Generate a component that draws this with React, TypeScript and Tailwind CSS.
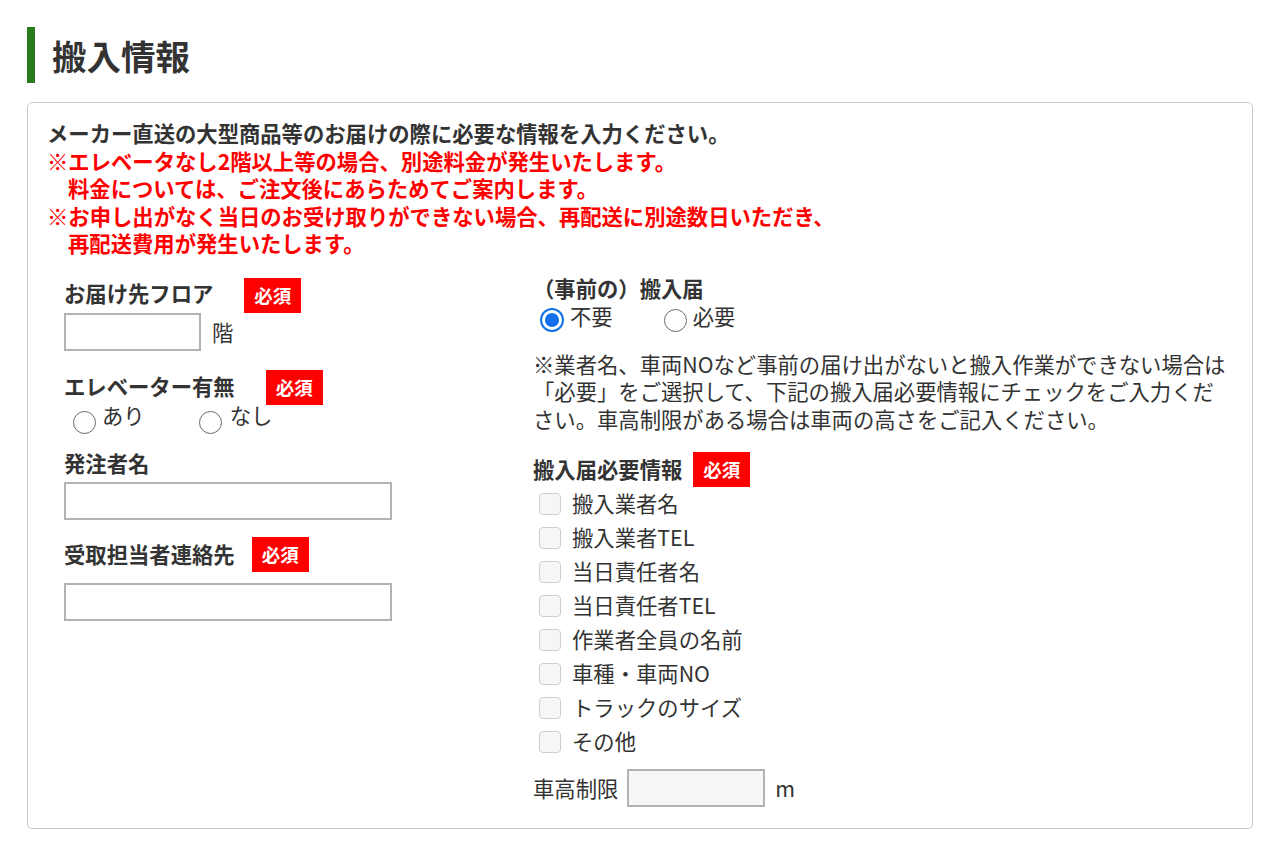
import React from "react";

const FONT = '"Noto Sans CJK JP", "Noto Sans", sans-serif';

function Badge() {
  return (
    <span className="inline-flex h-[35px] w-[57px] items-center justify-center bg-[#ff0000] text-[18.5px] font-bold leading-none text-white">
      必須
    </span>
  );
}

function Radio({ checked = false }: { checked?: boolean }) {
  return checked ? (
    <span className="flex h-[24px] w-[24px] shrink-0 items-center justify-center rounded-full border-[2px] border-[#1170ea] bg-white">
      <span className="block h-[14px] w-[14px] rounded-full bg-[#1170ea]" />
    </span>
  ) : (
    <span className="block h-[23px] w-[23px] shrink-0 rounded-full border-[1.5px] border-[#6b6b6b] bg-white" />
  );
}

function Check({ label }: { label: string }) {
  return (
    <div className="flex h-[34px] items-center">
      <span className="ml-[6px] mt-[3px] block h-[22px] w-[22px] shrink-0 rounded-[4px] border border-[#cfcfcf] bg-[#f6f6f6]" />
      <span className="ml-[11px] text-[#333]">{label}</span>
    </div>
  );
}

export default function App() {
  return (
    <div
      className="min-h-[856px] bg-white px-[27px] pt-[27px] text-[21.33px] leading-[27.5px] text-[#333]"
      style={{ fontFamily: FONT }}
    >
      <div className="flex items-center">
        <div className="h-[56px] w-[8px] bg-[#2b7a1f]" />
        <h1 className="ml-[17px] text-[34.5px] font-bold leading-none text-[#333]">搬入情報</h1>
      </div>

      <div className="mt-[19px] rounded-[5px] border border-[#c9c9c9] px-[19px] pb-[21px] pt-[16px]">
        <div className="font-bold">
          <p className="text-[#333]">メーカー直送の大型商品等のお届けの際に必要な情報を入力ください。</p>
          <p className="text-[#ff0000]">※エレベータなし2階以上等の場合、別途料金が発生いたします。</p>
          <p className="pl-[21px] text-[#ff0000]">料金については、ご注文後にあらためてご案内します。</p>
          <p className="text-[#ff0000]">※お申し出がなく当日のお受け取りができない場合、再配送に別途数日いただき、</p>
          <p className="pl-[21px] text-[#ff0000]">再配送費用が発生いたします。</p>
        </div>

        <div className="mt-[19.5px] flex items-start">
          {/* left column */}
          <div className="w-[486px] shrink-0 pl-[17px] pt-[2px]">
            <div className="flex h-[35px] items-center">
              <span className="mb-[5px] font-bold">お届け先フロア</span>
              <span className="ml-[31px]">
                <Badge />
              </span>
            </div>
            <div className="flex items-center">
              <div className="h-[38px] w-[137px] border-[2px] border-[#b3b3b3] bg-white" />
              <span className="ml-[11px]">階</span>
            </div>

            <div className="mt-[19px] flex h-[35px] items-center">
              <span className="mb-[4px] font-bold">エレベーター有無</span>
              <span className="ml-[31px]">
                <Badge />
              </span>
            </div>
            <div className="-mt-[4px] flex items-start">
              <span className="ml-[9px] mt-[10px]">
                <Radio />
              </span>
              <span className="ml-[6px]">あり</span>
              <span className="ml-[54px] mt-[10px]">
                <Radio />
              </span>
              <span className="ml-[8px]">なし</span>
            </div>

            <div className="mt-[15px] font-bold">発注者名</div>
            <div className="mt-[5px] h-[38px] w-[328px] border-[2px] border-[#b3b3b3] bg-white" />

            <div className="mt-[17px] flex h-[36px] items-center">
              <span className="mb-[2px] font-bold">受取担当者連絡先</span>
              <span className="ml-[17px]">
                <Badge />
              </span>
            </div>
            <div className="mt-[10px] h-[38px] w-[328px] border-[2px] border-[#b3b3b3] bg-white" />
          </div>

          {/* right column */}
          <div className="-mt-[2px] min-w-0 flex-1 pr-[3px]">
            <div className="font-bold">（事前の）搬入届</div>
            <div className="flex items-start">
              <span className="ml-[7px] mt-[6px]">
                <Radio checked />
              </span>
              <span className="ml-[6px]">不要</span>
              <span className="ml-[51px] mt-[7px]">
                <Radio />
              </span>
              <span className="ml-[6px]">必要</span>
            </div>
            <p className="mt-[18px] break-all">
              ※業者名、車両NOなど事前の届け出がないと搬入作業ができない場合は「必要」をご選択して、下記の搬入届必要情報にチェックをご入力ください。車高制限がある場合は車両の高さをご記入ください。
            </p>

            <div className="mt-[19.5px] flex h-[35px] items-center">
              <span className="font-bold">搬入届必要情報</span>
              <span className="ml-[11px]">
                <Badge />
              </span>
            </div>
            <div className="-mt-[1px]">
              <Check label="搬入業者名" />
              <Check label="搬入業者TEL" />
              <Check label="当日責任者名" />
              <Check label="当日責任者TEL" />
              <Check label="作業者全員の名前" />
              <Check label="車種・車両NO" />
              <Check label="トラックのサイズ" />
              <Check label="その他" />
            </div>
            <div className="mt-[11px] flex items-center">
              <span>車高制限</span>
              <div className="ml-[9px] h-[38px] w-[138px] border-[2px] border-[#b3b3b3] bg-[#f7f7f7]" />
              <span className="ml-[10px]">m</span>
            </div>
          </div>
        </div>
      </div>
    </div>
  );
}
